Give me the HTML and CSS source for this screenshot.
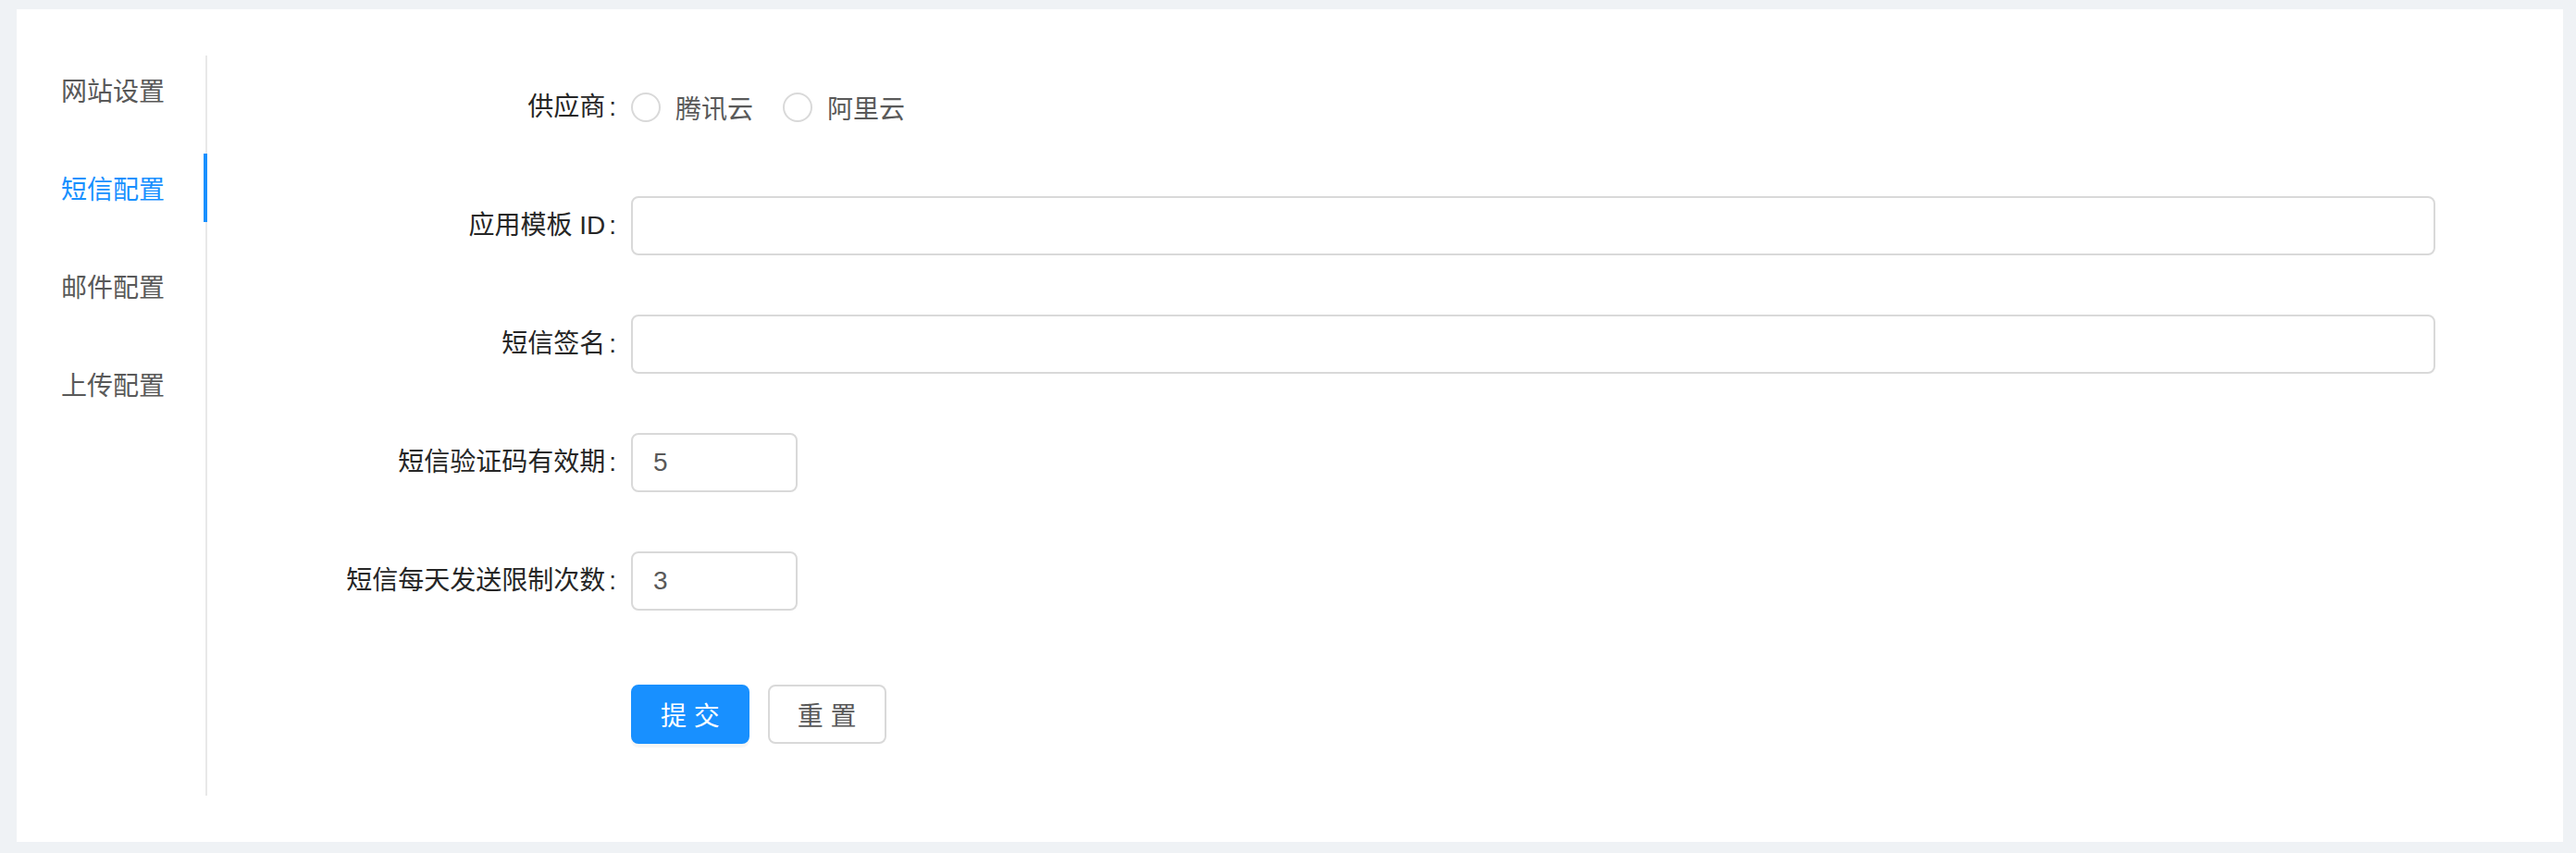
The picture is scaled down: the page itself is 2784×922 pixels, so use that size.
FILE: index.html
```html
<!DOCTYPE html>
<html lang="zh-CN">
<head>
<meta charset="utf-8">
<title>短信配置</title>
<link rel="stylesheet" href="styles.css">
</head>
<body>
<div class="card">
  <div class="tabs">
    <nav class="tabs-nav">
      <ul class="tab-list">
        <li class="tab">网站设置</li>
        <li class="tab tab-active">短信配置</li>
        <li class="tab">邮件配置</li>
        <li class="tab">上传配置</li>
      </ul>
    </nav>
    <div class="tab-pane">
      <form class="form">
        <div class="form-row">
          <label class="form-label">供应商</label>
          <div class="form-control">
            <span class="radio"><span class="radio-circle"></span><span class="radio-text">腾讯云</span></span>
            <span class="radio"><span class="radio-circle"></span><span class="radio-text">阿里云</span></span>
          </div>
        </div>
        <div class="form-row">
          <label class="form-label">应用模板 ID</label>
          <div class="form-control"><input class="input input-wide" type="text"></div>
        </div>
        <div class="form-row">
          <label class="form-label">短信签名</label>
          <div class="form-control"><input class="input input-wide" type="text"></div>
        </div>
        <div class="form-row">
          <label class="form-label">短信验证码有效期</label>
          <div class="form-control"><input class="input input-number" type="text" value="5"></div>
        </div>
        <div class="form-row">
          <label class="form-label">短信每天发送限制次数</label>
          <div class="form-control"><input class="input input-number" type="text" value="3"></div>
        </div>
        <div class="form-row form-actions">
          <div class="form-label form-label-empty"></div>
          <div class="form-control">
            <button class="btn btn-primary" type="button">提 交</button>
            <button class="btn btn-default" type="button">重 置</button>
          </div>
        </div>
      </form>
    </div>
  </div>
</div>
</body>
</html>
```
FILE: styles.css
```css
* {
  box-sizing: border-box;
}

html, body {
  margin: 0;
}

body {
  background: #eff2f5;
  padding: 10px 14px 12px 18px;
  font-family: "Liberation Sans", "Noto Sans CJK SC", sans-serif;
  font-size: 28px;
  color: #595959;
}

.card {
  background: #fff;
  height: 900px;
  padding: 50px 0;
}

.tabs {
  display: flex;
  height: 800px;
}

.tabs-nav {
  width: 206px;
  flex: 0 0 206px;
  border-right: 2px solid #e8e8e8;
}

.tab-list {
  list-style: none;
  margin: 0 -2px 0 0;
  padding: 0;
}

.tab {
  height: 74px;
  line-height: 68px;
  padding: 6px 0 0 48px;
  margin-bottom: 32px;
  color: #595959;
  white-space: nowrap;
}

.tab-active {
  color: #1890ff;
  box-shadow: inset -4px 0 0 #1890ff;
}

.tab-pane {
  flex: 1;
}

.form {
  padding-top: 16px;
}

.form-row {
  display: flex;
  align-items: center;
  height: 80px;
  margin-bottom: 48px;
}

.form-label {
  width: 458px;
  flex: 0 0 458px;
  text-align: right;
  color: #262626;
  line-height: 80px;
  white-space: nowrap;
}

.form-label::after {
  content: ":";
  margin: 0 16px 0 4px;
}

.form-label-empty::after {
  content: none;
}

.form-control {
  display: flex;
  align-items: center;
}

.radio {
  display: inline-flex;
  align-items: center;
  margin-right: 16px;
  color: #595959;
}

.radio-circle {
  width: 32px;
  height: 32px;
  border: 2px solid #d9d9d9;
  border-radius: 50%;
  background: #fff;
}

.radio-text {
  padding: 0 16px;
}

.input {
  height: 64px;
  border: 2px solid #d9d9d9;
  border-radius: 8px;
  background: #fff;
  font: inherit;
  color: #595959;
  padding: 0 22px;
  outline: none;
}

.input-wide {
  width: 1950px;
}

.input-number {
  width: 180px;
}

.form-actions {
  align-items: flex-start;
  padding-top: 24px;
  height: 104px;
}

.btn {
  height: 64px;
  padding: 0 30px;
  border-radius: 8px;
  border: 2px solid #d9d9d9;
  font: inherit;
  background: #fff;
  color: #595959;
  white-space: nowrap;
}

.btn-primary {
  background: #1890ff;
  border-color: #1890ff;
  color: #fff;
  box-shadow: 0 4px 0 rgba(0, 0, 0, 0.035);
}

.btn-default {
  margin-left: 20px;
}
```
